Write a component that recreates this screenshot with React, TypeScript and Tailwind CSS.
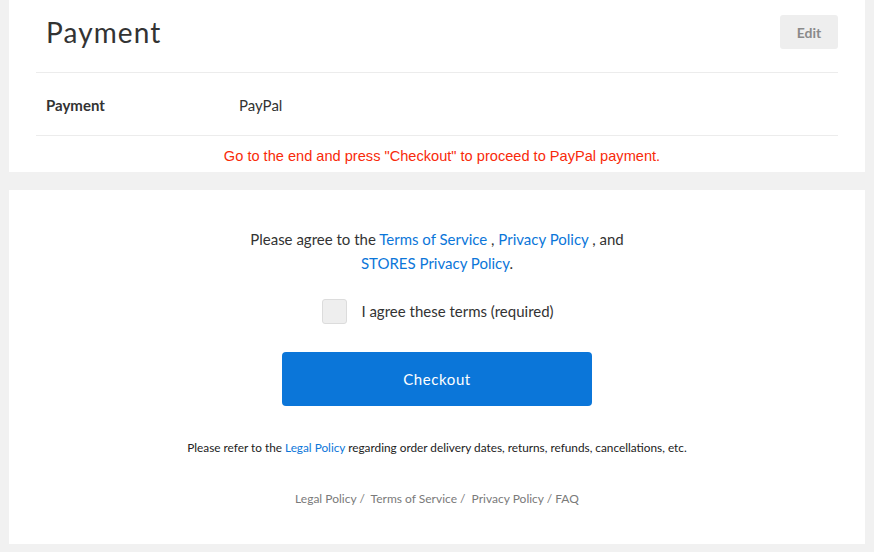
import { useState } from "react";

const lato = "font-['Lato','Noto_Sans',sans-serif]";

function PaymentPanel() {
  return (
    <section className="mx-[9px] bg-white px-[27px]">
      <div className="flex h-[73px] items-start justify-between border-b border-[#ececec] pt-[15px]">
        <h2 className="pl-[10px] pt-[1px] text-[28px] leading-[32px] tracking-[1.1px] text-[#333]">
          Payment
        </h2>
        <button className="h-[34px] w-[58px] rounded-[3px] bg-[#eeeeee] text-[14px] font-bold text-[#8a8a8a]">
          Edit
        </button>
      </div>
      <div className="flex h-[63px] items-center border-b border-[#ececec] px-[10px] pt-[3px] text-[15px] text-[#333]">
        <span className="w-[193px] font-bold">Payment</span>
        <span>PayPal</span>
      </div>
      <p className="flex h-[36px] items-center justify-center pl-[10px] pt-[5px] font-['Liberation_Sans',Arial,sans-serif] text-[14.6px] text-[#f82a0a]">
        Go to the end and press "Checkout" to proceed to PayPal payment.
      </p>
    </section>
  );
}

function AgreePanel() {
  const [agreed, setAgreed] = useState(false);

  return (
    <section className="mx-[9px] mt-[18px] flex flex-col items-center bg-white pb-[35px] pt-[37px] text-[#333]">
      <p className="text-center text-[15px] leading-[24px]">
        Please agree to the <a className="text-[#0b76d9]">Terms of Service</a> ,{" "}
        <a className="text-[#0b76d9]">Privacy Policy</a> , and
        <br />
        <a className="text-[#0b76d9]">STORES Privacy Policy</a>.
      </p>
      <label className="ml-[2px] mt-[24px] flex items-center gap-[14px] text-[15px]">
        <span
          onClick={() => setAgreed(!agreed)}
          className="size-[25px] rounded-[3px] border border-[#dcdcdc] bg-[#eeeeee]"
        />
        I agree these terms (required)
      </label>
      <button className="mt-[28px] h-[54px] w-[310px] rounded-[4px] bg-[#0b76d9] text-[15px] tracking-[0.6px] text-white">
        Checkout
      </button>
      <p className="mt-[32px] text-[11.8px] leading-[20px] text-[#222]">
        Please refer to the <a className="text-[#0b76d9]">Legal Policy</a> regarding order
        delivery dates, returns, refunds, cancellations, etc.
      </p>
      <p className="mt-[31px] text-[12px] leading-[20px] text-[#7a7a7a]">
        Legal Policy /&nbsp; Terms of Service /&nbsp; Privacy Policy / FAQ
      </p>
    </section>
  );
}

export default function App() {
  return (
    <div className={`${lato} h-[552px] w-[874px] overflow-hidden bg-[#f1f1f1]`}>
      <PaymentPanel />
      <AgreePanel />
    </div>
  );
}
